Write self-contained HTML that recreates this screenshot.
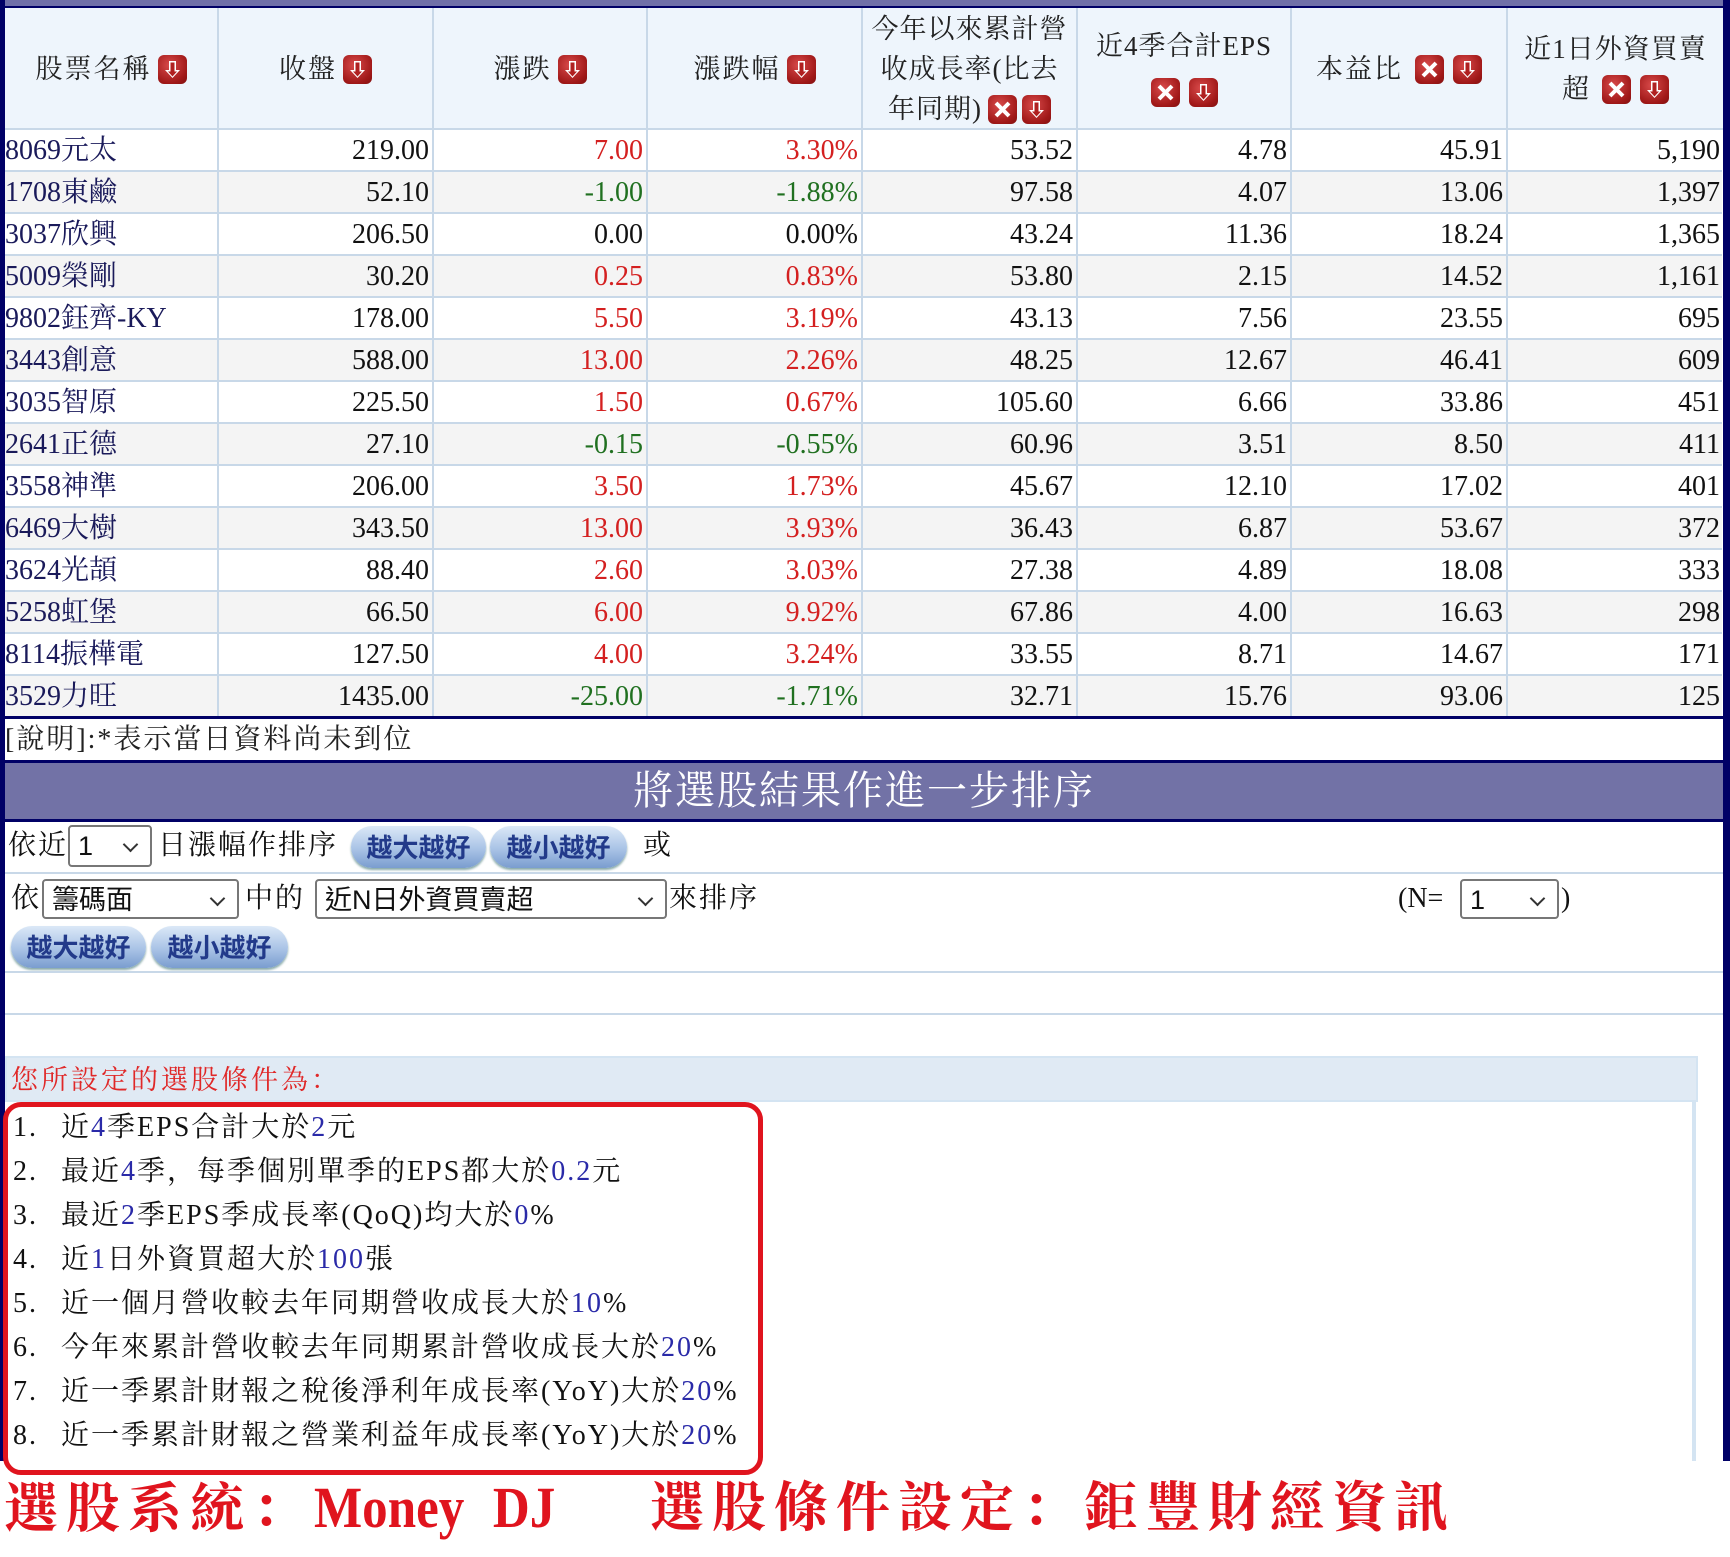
<!DOCTYPE html>
<html><head><meta charset="utf-8"><style>
*{margin:0;padding:0;box-sizing:border-box}
body{width:1730px;height:1557px;background:#fff;position:relative;overflow:hidden;font-family:"Liberation Serif","Noto Serif CJK SC",serif;color:#111}
.a{position:absolute}
.hd{position:absolute;top:8px;height:122px;background:#eef5fc;border-right:2px solid #c8d8e8;display:flex;align-items:center;justify-content:center;text-align:center;font-size:27px;line-height:40px;color:#222}
.hd>div{white-space:nowrap;letter-spacing:2px}
.ic{display:inline-block;width:29px;height:29px;border-radius:6px;background:radial-gradient(circle at 40% 35%,#d84a4a,#a01818 70%,#801010);vertical-align:middle;margin-left:6px;position:relative;top:-2px}
.ic svg{position:absolute;left:1px;top:1px}
.row{position:absolute;left:5px;width:1717px;height:42px;border-bottom:2px solid #c8d8e8}
.c{position:absolute;top:0;height:40px;line-height:42px;font-size:28px;text-align:right;padding-right:3px;border-right:2px solid #c8d8e8}
.r{color:#d42020}.g{color:#207020}.n{color:#1a1a5a}
.btn{position:absolute;height:42px;border-radius:21px;background:linear-gradient(#dbe8f7,#a9c3e6 55%,#7a9dcf);color:#223a8a;font-size:26px;font-weight:bold;line-height:42px;text-align:center;font-family:"Noto Sans CJK TC",sans-serif;box-shadow:0 2px 2px #8aa}
.sel{position:absolute;border:2px solid #777;border-radius:4px;background:#fff;font-size:27px;font-family:"Liberation Sans","Noto Sans CJK TC",sans-serif;padding-left:8px;line-height:38px}
.sel:after{content:"";position:absolute;right:14px;top:12px;width:9px;height:9px;border-right:2px solid #333;border-bottom:2px solid #333;transform:rotate(45deg)}
.t{position:absolute;font-size:28px;line-height:40px;letter-spacing:2px}
.li{position:absolute;left:13px;font-size:28px;line-height:40px;letter-spacing:2px;white-space:nowrap}
.li span.b{color:#2a2aa8}
.li .num{display:inline-block;width:48px}
.big{position:absolute;top:1476px;font-size:54px;line-height:64px;font-weight:bold;color:#e0141e;white-space:nowrap}
.big .k{letter-spacing:8px}
.big .m{letter-spacing:0;font-size:58px;display:inline-block;transform:scaleX(0.88);transform-origin:left;word-spacing:18px}
</style></head><body>
<div class="a" style="left:0;top:0;width:1730px;height:7px;background:#7070a8"></div>
<div class="a" style="left:0;top:6px;width:1730px;height:2px;background:#000066"></div>
<div class="a" style="left:0;top:0;width:5px;height:1461px;background:#000066"></div>
<div class="a" style="left:1723px;top:0;width:7px;height:1461px;background:#000066"></div>

<div class="hd" style="left:5px;width:214px"><div>股票名稱<span class="ic"><svg width="27" height="27"><path d="M10 5h7v9h4l-7.5 8-7.5-8h4z" fill="#fff"/><path d="M11.5 6.5h4v9h2.5l-4.5 5-4.5-5h2.5z" fill="#b02020"/></svg></span></div></div>
<div class="hd" style="left:219px;width:215px"><div>收盤<span class="ic"><svg width="27" height="27"><path d="M10 5h7v9h4l-7.5 8-7.5-8h4z" fill="#fff"/><path d="M11.5 6.5h4v9h2.5l-4.5 5-4.5-5h2.5z" fill="#b02020"/></svg></span></div></div>
<div class="hd" style="left:434px;width:214px"><div>漲跌<span class="ic"><svg width="27" height="27"><path d="M10 5h7v9h4l-7.5 8-7.5-8h4z" fill="#fff"/><path d="M11.5 6.5h4v9h2.5l-4.5 5-4.5-5h2.5z" fill="#b02020"/></svg></span></div></div>
<div class="hd" style="left:648px;width:215px"><div>漲跌幅<span class="ic"><svg width="27" height="27"><path d="M10 5h7v9h4l-7.5 8-7.5-8h4z" fill="#fff"/><path d="M11.5 6.5h4v9h2.5l-4.5 5-4.5-5h2.5z" fill="#b02020"/></svg></span></div></div>
<div class="hd" style="left:863px;width:215px"><div style="letter-spacing:1px">今年以來累計營<br>收成長率(比去<br>年同期)<span class="ic"><svg width="27" height="27"><path d="M7 7l13 13M20 7L7 20" stroke="#fff" stroke-width="4"/></svg></span><span class="ic" style="margin-left:5px"><svg width="27" height="27"><path d="M10 5h7v9h4l-7.5 8-7.5-8h4z" fill="#fff"/><path d="M11.5 6.5h4v9h2.5l-4.5 5-4.5-5h2.5z" fill="#b02020"/></svg></span></div></div>
<div class="hd" style="left:1078px;width:214px"><div style="line-height:46px;letter-spacing:1px">近4季合計EPS<br><span class="ic" style="margin:0"><svg width="27" height="27"><path d="M7 7l13 13M20 7L7 20" stroke="#fff" stroke-width="4"/></svg></span><span class="ic" style="margin-left:9px"><svg width="27" height="27"><path d="M10 5h7v9h4l-7.5 8-7.5-8h4z" fill="#fff"/><path d="M11.5 6.5h4v9h2.5l-4.5 5-4.5-5h2.5z" fill="#b02020"/></svg></span></div></div>
<div class="hd" style="left:1292px;width:216px"><div>本益比<span class="ic" style="margin-left:12px"><svg width="27" height="27"><path d="M7 7l13 13M20 7L7 20" stroke="#fff" stroke-width="4"/></svg></span><span class="ic" style="margin-left:9px"><svg width="27" height="27"><path d="M10 5h7v9h4l-7.5 8-7.5-8h4z" fill="#fff"/><path d="M11.5 6.5h4v9h2.5l-4.5 5-4.5-5h2.5z" fill="#b02020"/></svg></span></div></div>
<div class="hd" style="left:1508px;width:215px;border-right:none"><div style="letter-spacing:1px">近1日外資買賣<br>超<span class="ic" style="margin-left:12px"><svg width="27" height="27"><path d="M7 7l13 13M20 7L7 20" stroke="#fff" stroke-width="4"/></svg></span><span class="ic" style="margin-left:9px"><svg width="27" height="27"><path d="M10 5h7v9h4l-7.5 8-7.5-8h4z" fill="#fff"/><path d="M11.5 6.5h4v9h2.5l-4.5 5-4.5-5h2.5z" fill="#b02020"/></svg></span></div></div>
<div class="a" style="left:5px;top:128px;width:1718px;height:2px;background:#c8d8e8"></div>

<div id="rows"></div>
<script>
var d=[["8069元太","219.00","7.00","3.30%","53.52","4.78","45.91","5,190","r"],
["1708東鹼","52.10","-1.00","-1.88%","97.58","4.07","13.06","1,397","g"],
["3037欣興","206.50","0.00","0.00%","43.24","11.36","18.24","1,365",""],
["5009榮剛","30.20","0.25","0.83%","53.80","2.15","14.52","1,161","r"],
["9802鈺齊-KY","178.00","5.50","3.19%","43.13","7.56","23.55","695","r"],
["3443創意","588.00","13.00","2.26%","48.25","12.67","46.41","609","r"],
["3035智原","225.50","1.50","0.67%","105.60","6.66","33.86","451","r"],
["2641正德","27.10","-0.15","-0.55%","60.96","3.51","8.50","411","g"],
["3558神準","206.00","3.50","1.73%","45.67","12.10","17.02","401","r"],
["6469大樹","343.50","13.00","3.93%","36.43","6.87","53.67","372","r"],
["3624光頡","88.40","2.60","3.03%","27.38","4.89","18.08","333","r"],
["5258虹堡","66.50","6.00","9.92%","67.86","4.00","16.63","298","r"],
["8114振樺電","127.50","4.00","3.24%","33.55","8.71","14.67","171","r"],
["3529力旺","1435.00","-25.00","-1.71%","32.71","15.76","93.06","125","g"]];
var L=[0,214,429,643,858,1073,1287,1503,1718],h="";
d.forEach(function(r,i){h+='<div class="row" style="top:'+(130+i*42)+'px;background:'+(i%2?'#f4f4f4':'#fff')+'">';
for(var j=0;j<8;j++){var cl=j==0?'n':((j==2||j==3)?r[8]:'');
h+='<div class="c '+cl+'" style="left:'+L[j]+'px;width:'+(L[j+1]-L[j])+'px;'+(j==0?'text-align:left;padding-left:0;':'')+(j==7?'border-right:none;':'')+'">'+r[j]+'</div>';}
h+='</div>';});
document.getElementById('rows').innerHTML=h;
</script>
<div class="a" style="left:0;top:716px;width:1730px;height:3px;background:#000066"></div>
<div class="t" style="left:5px;top:720px;color:#222">[說明]:*表示當日資料尚未到位</div>
<div class="a" style="left:0;top:760px;width:1730px;height:3px;background:#000066"></div>
<div class="a" style="left:5px;top:763px;width:1718px;height:56px;background:#7272a6;color:#fff;font-size:40px;line-height:56px;text-align:center;letter-spacing:2px">將選股結果作進一步排序</div>
<div class="a" style="left:0;top:819px;width:1730px;height:3px;background:#000066"></div>

<div class="t" style="left:8px;top:826px">依近</div>
<div class="sel" style="left:68px;top:825px;width:84px;height:42px">1</div>
<div class="t" style="left:158px;top:826px">日漲幅作排序</div>
<div class="btn" style="left:351px;top:826px;width:135px">越大越好</div>
<div class="btn" style="left:490px;top:826px;width:137px">越小越好</div>
<div class="t" style="left:643px;top:826px">或</div>
<div class="a" style="left:5px;top:872px;width:1718px;height:2px;background:#c8d8e8"></div>

<div class="t" style="left:11px;top:879px">依</div>
<div class="sel" style="left:42px;top:879px;width:197px;height:40px">籌碼面</div>
<div class="t" style="left:245px;top:879px">中的</div>
<div class="sel" style="left:315px;top:879px;width:352px;height:40px">近N日外資買賣超</div>
<div class="t" style="left:669px;top:879px">來排序</div>
<div class="t" style="left:1398px;top:879px;letter-spacing:0">(N=</div>
<div class="sel" style="left:1460px;top:879px;width:99px;height:40px">1</div>
<div class="t" style="left:1561px;top:879px">)</div>
<div class="btn" style="left:11px;top:926px;width:135px">越大越好</div>
<div class="btn" style="left:151px;top:926px;width:137px">越小越好</div>
<div class="a" style="left:5px;top:971px;width:1718px;height:2px;background:#c8d8e8"></div>
<div class="a" style="left:5px;top:1013px;width:1718px;height:2px;background:#c8d8e8"></div>

<div class="a" style="left:5px;top:1056px;width:1693px;height:46px;background:#e0eaf4;border:2px solid #d4e4f2"></div>
<div class="a" style="left:1692px;top:1100px;width:4px;height:361px;background:#d4e4f2"></div>
<div class="t" style="left:11px;top:1060px;color:#e02828;font-size:27px;letter-spacing:3px">您所設定的選股條件為：</div>

<div class="a" style="left:3px;top:1102px;width:760px;height:373px;border:5px solid #e0141e;border-radius:18px"></div>
<div class="li" style="top:1108px"><span class="num">1.</span>近<span class="b">4</span>季EPS合計大於<span class="b">2</span>元</div>
<div class="li" style="top:1152px"><span class="num">2.</span>最近<span class="b">4</span>季，每季個別單季的EPS都大於<span class="b">0.2</span>元</div>
<div class="li" style="top:1196px"><span class="num">3.</span>最近<span class="b">2</span>季EPS季成長率(QoQ)均大於<span class="b">0</span>%</div>
<div class="li" style="top:1240px"><span class="num">4.</span>近<span class="b">1</span>日外資買超大於<span class="b">100</span>張</div>
<div class="li" style="top:1284px"><span class="num">5.</span>近一個月營收較去年同期營收成長大於<span class="b">10</span>%</div>
<div class="li" style="top:1328px"><span class="num">6.</span>今年來累計營收較去年同期累計營收成長大於<span class="b">20</span>%</div>
<div class="li" style="top:1372px"><span class="num">7.</span>近一季累計財報之稅後淨利年成長率(YoY)大於<span class="b">20</span>%</div>
<div class="li" style="top:1416px"><span class="num">8.</span>近一季累計財報之營業利益年成長率(YoY)大於<span class="b">20</span>%</div>

<div class="big" style="left:4px"><span class="k">選股系統：</span><span class="m">Money DJ</span></div>
<div class="big" style="left:650px"><span class="k">選股條件設定：鉅豐財經資訊</span></div>
</body></html>
